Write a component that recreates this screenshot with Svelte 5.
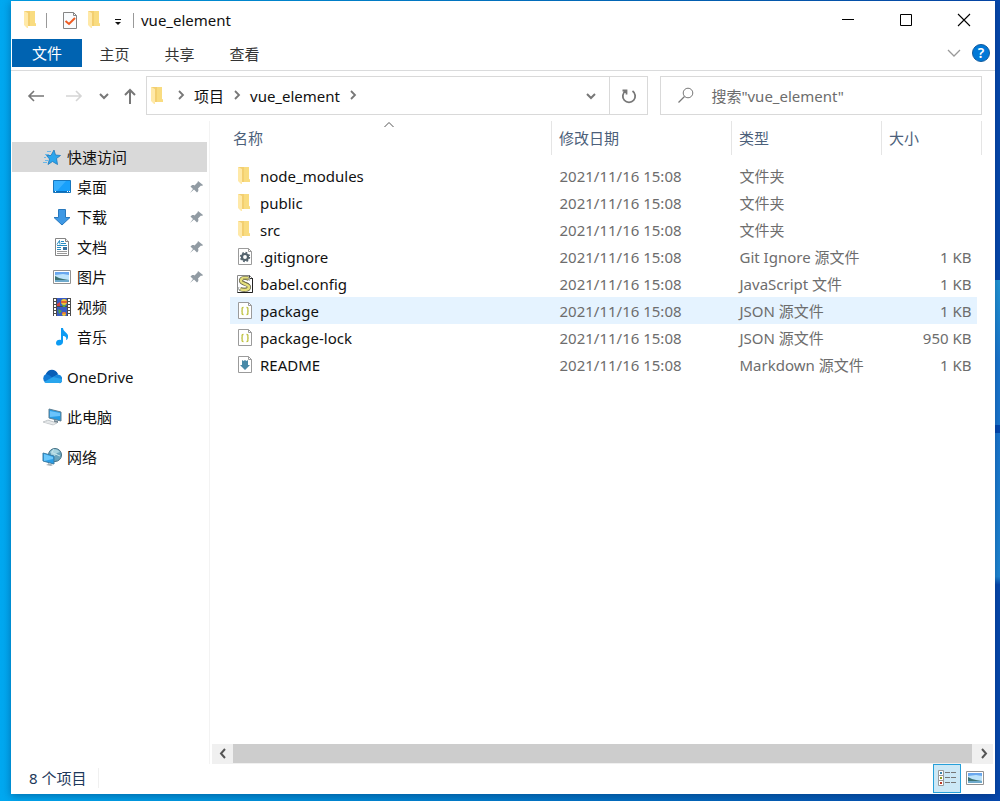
<script lang="ts">
  interface Place {
    name: string;
    icon: string;
    pinned?: boolean;
  }

  interface FileItem {
    name: string;
    icon: string;
    date: string;
    type: string;
    size: string;
  }

  const ribbonTabs: string[] = ['主页', '共享', '查看'];

  const quickAccess: Place[] = [
    { name: '桌面', icon: 'desktop', pinned: true },
    { name: '下载', icon: 'download', pinned: true },
    { name: '文档', icon: 'document', pinned: true },
    { name: '图片', icon: 'picture', pinned: true },
    { name: '视频', icon: 'video' },
    { name: '音乐', icon: 'music' }
  ];

  const roots: Place[] = [
    { name: 'OneDrive', icon: 'cloud' },
    { name: '此电脑', icon: 'computer' },
    { name: '网络', icon: 'network' }
  ];

  const date = '2021/11/16 15:08';

  const files: FileItem[] = [
    { name: 'node_modules', icon: 'folder', date, type: '文件夹', size: '' },
    { name: 'public', icon: 'folder', date, type: '文件夹', size: '' },
    { name: 'src', icon: 'folder', date, type: '文件夹', size: '' },
    { name: '.gitignore', icon: 'gear', date, type: 'Git Ignore 源文件', size: '1 KB' },
    { name: 'babel.config', icon: 'script', date, type: 'JavaScript 文件', size: '1 KB' },
    { name: 'package', icon: 'json', date, type: 'JSON 源文件', size: '1 KB' },
    { name: 'package-lock', icon: 'json', date, type: 'JSON 源文件', size: '950 KB' },
    { name: 'README', icon: 'markdown', date, type: 'Markdown 源文件', size: '1 KB' }
  ];

  let selected = $state('package');
  let view = $state('details');
  let search = $state('');
</script>

{#snippet icon(name: string)}
  <svg class="icon" viewBox="0 0 20 20" aria-hidden="true">
    {#if name === 'folder'}
      <path d="M3 1h11v12l1 1v2H5z" fill="#f3cf70" />
      <path d="M9 1h5v12l1 1v2H9z" fill="#f9dc80" />
      <path d="M3 1l4 2v15l-1 0-3-3z" fill="#ffe9a8" />
    {:else if name === 'star'}
      <path d="M12 3l1.500 5 5 .5-4 3 1 6-5-3-4.500 3 1.500-5.500-3-3.500h4.500z" fill="#2ba5ec" stroke="#1d78bd" stroke-width=".8" />
      <path d="M5 4.500h4M3 7.500h4M2 10.500h2M3 13.500h3M1 15.500h4" stroke="#69b7e8" stroke-width="1" />
    {:else if name === 'desktop'}
      <path d="M1.500 3.500h17v12h-17z" fill="#18a0fb" stroke="#1776bd" />
      <path d="M2 4h12L5 14H2z" fill="#37b0ff" />
      <path d="M2 14.500h16" stroke="#0a6ebc" />
      <path d="M3 14.500h1M15 14.500h1M17 14.500h1" stroke="#fff" />
    {:else if name === 'download'}
      <path d="M6.500 2.500h7v8h4.500l-8 7.500-8-7.500h4.500z" fill="#3e98e4" stroke="#2878bd" />
    {:else if name === 'document'}
      <path d="M3.500 1.500h10l3 3v14h-13z" fill="#fff" stroke="#858585" />
      <path d="M13.500 1.500v3h3" fill="#eee" stroke="#858585" />
      <path d="M5 7.500l2.500-4L8 7.500M9 4.500h3M9 6.500h5M5 8.500h10M5 10.500h4M5 12.500h4" fill="none" stroke="#278cc2" />
      <path d="M5 14.500h10M5 16.500h10" stroke="#999" />
      <path d="M11 10h4v3h-4z" fill="#38709d" />
    {:else if name === 'picture'}
      <path d="M1.500 3.500h17v13h-17z" fill="#fff" stroke="#929292" />
      <path d="M3 5h14v10H3z" fill="#bce3fb" />
      <path d="M3 5h14v3l-6-1-8 1z" fill="#69a7ee" />
      <path d="M3 9l4 2 4 1 6 1v1H3z" fill="#3d7272" />
      <path d="M3 13h14v2H3z" fill="#6faacc" />
    {:else if name === 'video'}
      <path d="M1 1h18v18H1z" fill="#4b4b4b" />
      <path d="M5 1h10v8H5zM5 10h10v9H5z" fill="#385cc5" />
      <path d="M3 2v17M17 2v17" stroke="#fff" stroke-width="2" stroke-dasharray="2 1" />
      <path d="M5 7l3-2v4H5z" fill="#dc453f" />
      <circle cx="12" cy="5" r="3" fill="#efc835" />
      <path d="M9 5h6" stroke="#df4433" stroke-width="1.500" />
      <path d="M10 8h4l-1 2h-2zM6 12l4 2-3 3z" fill="#55a64a" />
      <circle cx="12" cy="17" r="2" fill="#efc835" />
      <path d="M10 16h4" stroke="#dc453f" />
    {:else if name === 'music'}
      <path d="M9 1h2c0 4 6 5 5 9 0 2-1 3-2 3 1-3-1-4-3-4v6c0 4-7 5-7 1 0-3 3-4 5-3z" fill="#0c9bf3" />
    {:else if name === 'cloud'}
      <path d="M4 16a5 5 0 0 1 0-9c3-5 9-5 12 1 3 0 5 3 4 6s-2 2-4 2z" fill="#1179d4" />
      <path d="M4 7c2-5 9-6 12 0l-5 4-4-3z" fill="#075eb7" />
      <path d="M2 15l9-5 4-2c3-1 6 3 5 6-1 2-2 2-4 2H4z" fill="#29a5ed" />
      <path d="M11 10l4-2c3-1 5 2 5 4z" fill="#1686db" />
    {:else if name === 'computer'}
      <path d="M7 2l12 3v9L7 11z" fill="#269be3" stroke="#5e7e91" />
      <path d="M8 4l10 2v3L8 10z" fill="#6bc4fb" />
      <path d="M12 13v2l4 1v-2z" fill="#758894" />
      <path d="M1 15l5-2 9 3-4 2z" fill="#d4d9dc" stroke="#a1a7aa" stroke-width=".5" />
      <path d="M3 15l9 2M5 14l8 2.500" stroke="#fff" stroke-width=".5" />
    {:else if name === 'network'}
      <circle cx="13" cy="8" r="6.500" fill="#68a4bd" stroke="#426f83" />
      <path d="M8 5c4-4 7-3 10 0l-3 1-3 4-2-3z" fill="#a8d4df" />
      <path d="M12 2c-3 4-3 8 0 12M18 9l-7-3" fill="none" stroke="#c7e5eb" />
      <path d="M1 6l11 3v8L1 14z" fill="#2a9de6" stroke="#397ca5" />
      <path d="M2 7l9 3v2l-9 2z" fill="#6cc8fb" />
      <path d="M6 16v1l-2 1 5 1 2-1-2-1z" fill="#a7b2b8" />
    {:else if name === 'gear'}
      <path d="M3.500 1.500h10l3 3v13h-13z" fill="#fff" stroke="#9b9b9b" />
      <path d="M13.500 1.500v3h3" fill="none" stroke="#9b9b9b" />
      <circle cx="10" cy="10" r="3" fill="none" stroke="#53636d" stroke-width="2.200" />
      <circle cx="10" cy="10" r="4.400" fill="none" stroke="#53636d" stroke-width="1.600" stroke-dasharray="1.728 1.728" />
    {:else if name === 'script'}
      <path d="M2.500 1.500h12l3 3v14h-15z" fill="#fff" stroke="#888" />
      <path d="M17.500 4v14.500h-15" fill="none" stroke="#222" />
      <path d="M14.500 1.500v3h3" fill="none" stroke="#333" />
      <path d="M14 5c-3-2-9-1-8 2 1 3 8 3 8 6 0 4-7 3-9 2" fill="none" stroke="#5d5b49" stroke-width="4" />
      <path d="M14 5c-3-2-9-1-8 2 1 3 8 3 8 6 0 4-7 3-9 2" fill="none" stroke="#e5df7c" stroke-width="2.600" />
      <path d="M8 5h6M7 7l7 3M6 14h6" stroke="#77724a" stroke-width=".8" />
      <path d="M13 4l2 1-1 2M4 13l-1 2 3 1" fill="none" stroke="#a2a6a3" />
    {:else if name === 'json'}
      <path d="M3.500 1.500h10l3 3v13h-13z" fill="#fff" stroke="#9b9b9b" />
      <path d="M13.500 1.500v3h3" fill="none" stroke="#9b9b9b" />
      <path d="M8.500 6.500c-3 0 0 3-2 3.500 2 .5-1 3.500 2 3.500M11.500 6.500c3 0 0 3 2 3.500-2 .5 1 3.500-2 3.500" fill="none" stroke="#bdc13d" stroke-width="1.300" />
    {:else if name === 'markdown'}
      <path d="M3.500 1.500h10l3 3v13h-13z" fill="#fff" stroke="#9b9b9b" />
      <path d="M13.500 1.500v3h3" fill="none" stroke="#9b9b9b" />
      <path d="M7 5l1.500 1L10 5l1.500 1L13 5v5h2l-5 5-5-5h2z" fill="#4689a8" />
    {:else if name === 'check'}
      <path d="M3.500 2.500h10l3 3v13h-13z" fill="#f9fbfd" stroke="#858585" />
      <path d="M13.500 2.500v3h3" fill="none" stroke="#858585" />
      <path d="M5.500 11l3.500 3 6-6" fill="none" stroke="#ee5b22" stroke-width="2" />
    {:else if name === 'pin'}
      <path d="M11 4l5 4-1 1-1-.5-3 3c1 2 0 3-1 4l-3-3-4 3.500L6 12 3.500 9.500c1-1 2-2 4-1l3-3z" fill="#919ba3" />
    {:else if name === 'back'}
      <path d="M18 10H3M8 5l-5 5 5 5" fill="none" stroke="currentColor" stroke-width="1.600" />
    {:else if name === 'forward'}
      <path d="M2 10h15M12 5l5 5-5 5" fill="none" stroke="currentColor" stroke-width="1.600" />
    {:else if name === 'up'}
      <path d="M10 18V4M5 9l5-5 5 5" fill="none" stroke="currentColor" stroke-width="2" />
    {:else if name === 'down'}
      <path d="M6 8l4 4 4-4" fill="none" stroke="currentColor" stroke-width="2" />
    {:else if name === 'wide-down'}
      <path d="M4 7l6 6 6-6" fill="none" stroke="currentColor" stroke-width="1.300" />
    {:else if name === 'right'}
      <path d="M8 5l4 4-4 4" fill="none" stroke="currentColor" stroke-width="1.800" />
    {:else if name === 'scroll-left'}
      <path d="M12 5L8 9.500l4 4.500" fill="none" stroke="currentColor" stroke-width="2" />
    {:else if name === 'scroll-right'}
      <path d="M9 5l4 4.500L9 14" fill="none" stroke="currentColor" stroke-width="2" />
    {:else if name === 'refresh'}
      <path d="M13.500 5a6.200 6.200 0 1 1-7 0M3.500 4.500h4v4" fill="none" stroke="currentColor" stroke-width="1.800" />
    {:else if name === 'search'}
      <circle cx="12" cy="7" r="4.800" fill="none" stroke="currentColor" />
      <path d="M8.500 10.500L2.500 16.500" stroke="currentColor" stroke-width="1.200" />
    {:else if name === 'sort'}
      <path d="M5.500 12l4.500-4.500 4.500 4.500" fill="none" stroke="currentColor" />
    {:else if name === 'menu'}
      <path d="M7 9.500h6" stroke="currentColor" />
      <path d="M7 12h6l-3 3z" fill="currentColor" />
    {:else if name === 'minimize'}
      <path d="M4 9.500h12" stroke="currentColor" />
    {:else if name === 'maximize'}
      <path d="M4.500 4.500h11v11h-11z" fill="none" stroke="currentColor" />
    {:else if name === 'close'}
      <path d="M4 4l12 12M16 4L4 16" stroke="currentColor" stroke-width="1.100" />
    {:else if name === 'details'}
      <path d="M1.500 2.500h5v5h-5zM1.500 7.500h5v5h-5zM1.500 12.500h5v5h-5z" fill="#fff" stroke="#999" />
      <path d="M8 4.500h5M14 4.500h5M8 9.500h5M14 9.500h5M8 14.500h5M14 14.500h5" stroke="#777" />
      <path d="M3 4h2v2H3z" fill="#3b83ad" />
      <path d="M3 9h2v2H3z" fill="#8b9b23" />
      <path d="M3 14h2v2H3z" fill="#b93724" />
    {/if}
  </svg>
{/snippet}

<div class="desktop">
  <main class="window">
    <header class="titlebar">
      <div class="quick-tools">
        <button aria-label="系统菜单">{@render icon('folder')}</button>
        <span class="divider"></span>
        <button class="props" aria-label="属性">{@render icon('check')}</button>
        <button aria-label="新建文件夹">{@render icon('folder')}</button>
        <button aria-label="自定义快速访问工具栏">{@render icon('menu')}</button>
        <span class="divider"></span>
      </div>
      <h1>vue_element</h1>
      <div class="window-buttons">
        <button aria-label="最小化">{@render icon('minimize')}</button>
        <button aria-label="最大化">{@render icon('maximize')}</button>
        <button aria-label="关闭">{@render icon('close')}</button>
      </div>
    </header>

    <nav class="ribbon">
      <button class="file-tab">文件</button>
      {#each ribbonTabs as tab}
        <button class="tab">{tab}</button>
      {/each}
      <div class="ribbon-end">
        <button aria-label="展开功能区">{@render icon('wide-down')}</button>
        <button class="help" aria-label="帮助">?</button>
      </div>
    </nav>

    <div class="navbar">
      <div class="history">
        <button aria-label="返回">{@render icon('back')}</button>
        <button class="off" aria-label="前进" disabled>{@render icon('forward')}</button>
        <button class="recent" aria-label="最近浏览的位置">{@render icon('down')}</button>
        <button aria-label="上移">{@render icon('up')}</button>
      </div>
      <div class="address">
        {@render icon('folder')}
        <span class="chevron">{@render icon('right')}</span>
        <button>项目</button>
        <span class="chevron">{@render icon('right')}</span>
        <button>vue_element</button>
        <span class="chevron">{@render icon('right')}</span>
        <button class="expand" aria-label="以前的位置">{@render icon('down')}</button>
        <button class="refresh" aria-label="刷新">{@render icon('refresh')}</button>
      </div>
      <label class="search">
        {@render icon('search')}
        <input type="text" aria-label="搜索" placeholder={'搜索"vue_element"'} bind:value={search} />
      </label>
    </div>

    <div class="body">
      <aside class="sidebar">
        <a class="place current" href="#quick">{@render icon('star')}<span>快速访问</span></a>
        {#each quickAccess as place}
          <a class="place child" href="#{place.icon}">
            {@render icon(place.icon)}
            <span>{place.name}</span>
            {#if place.pinned}
              <span class="pin">{@render icon('pin')}</span>
            {/if}
          </a>
        {/each}
        {#each roots as place}
          <a class="place root" href="#{place.icon}">{@render icon(place.icon)}<span>{place.name}</span></a>
        {/each}
      </aside>

      <section class="content">
        <div class="list">
          <table>
            <colgroup>
              <col />
              <col class="col-date" />
              <col class="col-type" />
              <col class="col-size" />
            </colgroup>
            <thead>
              <tr>
                <th>名称<span class="sort">{@render icon('sort')}</span></th>
                <th>修改日期</th>
                <th>类型</th>
                <th>大小</th>
              </tr>
            </thead>
            <tbody>
              {#each files as file}
                <tr class:selected={selected === file.name} onclick={() => (selected = file.name)}>
                  <td class="name"><div>{@render icon(file.icon)}<span>{file.name}</span></div></td>
                  <td>{file.date}</td>
                  <td>{file.type}</td>
                  <td class="size">{file.size}</td>
                </tr>
              {/each}
            </tbody>
          </table>
        </div>
        <div class="scrollbar">
          <button aria-label="向左滚动">{@render icon('scroll-left')}</button>
          <div class="thumb"></div>
          <button aria-label="向右滚动">{@render icon('scroll-right')}</button>
        </div>
      </section>
    </div>

    <footer class="status">
      <span class="count">{files.length} 个项目</span>
      <div class="views">
        <button class:active={view === 'details'} aria-label="详细信息" onclick={() => (view = 'details')}>
          {@render icon('details')}
        </button>
        <button class:active={view === 'large'} aria-label="大缩略图" onclick={() => (view = 'large')}>
          {@render icon('picture')}
        </button>
      </div>
    </footer>
  </main>
</div>

<style>
  :global(body) {
    margin: 0;
  }

  .desktop {
    box-sizing: border-box;
    display: flex;
    min-height: 100vh;
    padding: 1px 5px 7px 11px;
    background:
      linear-gradient(180deg, #0648ad 0%, #0648ad 35%, #2299d8 35%, #1a78d0 45%, #1a78d0 53%, #0449b0 53%, #0449b0 54%, #1a78d0 54%, #1f88d4 72%, #0648ad 73%) right / 5px 100% no-repeat,
      linear-gradient(90deg, #00a8f0 0%, #0098e0 20%, #0462b8 75%, #0648ad 100%);
    font-family: "Noto Sans", "Noto Sans CJK SC", sans-serif;
    font-size: 15px;
    line-height: 20px;
    color: #111;
  }

  .window {
    flex: 1;
    display: flex;
    flex-direction: column;
    min-width: 0;
    background: #fff;
    box-shadow: 0 2px 8px rgba(0, 30, 80, 0.4);
  }

  button {
    display: flex;
    align-items: center;
    justify-content: center;
    padding: 0;
    border: 0;
    background: none;
    font: inherit;
    color: inherit;
  }

  .icon {
    display: block;
    flex: none;
    width: 20px;
    height: 20px;
  }

  /* title bar */
  .titlebar {
    display: flex;
    align-items: center;
    height: 38px;
  }

  .quick-tools {
    display: flex;
    align-items: center;
    padding-left: 8px;
  }

  .quick-tools .props {
    margin: 0 2px 0 7px;
  }

  .quick-tools button {
    width: 23px;
  }

  .divider {
    width: 1px;
    height: 15px;
    margin: 0 4px;
    background: #999;
  }

  h1 {
    margin: 0 0 0 3px;
    font-size: 15px;
    font-weight: 400;
    line-height: 20px;
  }

  .window-buttons {
    display: flex;
    margin-left: auto;
    padding-right: 2px;
    color: #000;
  }

  .window-buttons button {
    width: 58px;
    height: 38px;
  }

  /* ribbon */
  .ribbon {
    display: flex;
    height: 31px;
    padding-left: 1px;
    border-bottom: 1px solid #dadbdc;
  }

  .file-tab {
    width: 70px;
    height: 28px;
    background: #0063b1;
    color: #fff;
  }

  .tab {
    width: 65px;
    height: 29px;
    color: #333;
  }

  .ribbon-end {
    display: flex;
    align-items: center;
    gap: 8px;
    height: 28px;
    margin-left: auto;
    padding-right: 5px;
    color: #999;
  }

  .help {
    box-sizing: border-box;
    width: 18px;
    height: 18px;
    border: 1px solid #125b9e;
    border-radius: 50%;
    background: #0078d7;
    color: #fff;
    font-size: 14px;
    line-height: 16px;
    font-weight: 600;
  }

  /* address row */
  .navbar {
    display: flex;
    padding: 5px 13px 6px 15px;
    gap: 6px;
    color: #777;
  }

  .history {
    display: flex;
    align-items: center;
    gap: 18px;
    width: 114px;
  }

  .history .off {
    color: #d5d5d5;
  }

  .history .recent {
    margin: 0 -12px 0 -8px;
  }

  .address,
  .search {
    box-sizing: border-box;
    display: flex;
    align-items: center;
    height: 39px;
    border: 1px solid #d9d9d9;
  }

  .address {
    flex: 100;
    padding-left: 1px;
    color: #111;
  }

  .chevron {
    margin: 0 3px;
    color: #777;
  }

  .expand {
    margin-left: auto;
    width: 36px;
    color: #777;
  }

  .refresh {
    width: 38px;
    height: 37px;
    border-left: 1px solid #d9d9d9;
    color: #777;
  }

  .search {
    flex: 61;
    gap: 15px;
    margin-left: 6px;
    padding-left: 15px;
  }

  .search input {
    flex: 1;
    min-width: 0;
    padding: 0;
    border: 0;
    outline: none;
    background: none;
    font: inherit;
    color: #666;
  }

  .search input::placeholder {
    color: #6d6d6d;
    opacity: 1;
  }

  /* folders tree */
  .body {
    flex: 1;
    display: flex;
    min-height: 0;
  }

  .sidebar {
    box-sizing: border-box;
    width: 199px;
    padding: 21px 2px 0 1px;
    border-right: 1px solid #f3f3f3;
  }

  .place {
    display: flex;
    align-items: center;
    gap: 5px;
    height: 30px;
    padding-left: 30px;
    color: #111;
    text-decoration: none;
  }

  .place.current {
    background: #d9d9d9;
  }

  .place.child {
    padding-left: 40px;
  }

  .place.root {
    margin-top: 10px;
  }

  .pin {
    margin-left: auto;
  }

  /* file list */
  .content {
    flex: 1;
    display: flex;
    flex-direction: column;
    min-width: 0;
    padding: 0 2px;
  }

  .list {
    flex: 1;
    padding: 0 11px 0 18px;
  }

  table {
    width: 100%;
    table-layout: fixed;
    border-collapse: collapse;
  }

  .col-date {
    width: 180px;
  }

  .col-type {
    width: 150px;
  }

  .col-size {
    width: 100px;
  }

  th {
    position: relative;
    height: 34px;
    padding: 0 0 0 7px;
    border-right: 1px solid #e5e5e5;
    color: #4c607a;
    font-weight: 400;
    text-align: left;
  }

  th:first-child {
    padding-left: 3px;
  }

  .sort {
    position: absolute;
    top: -6px;
    left: 50%;
    margin-left: -12px;
    color: #555;
  }

  thead::after {
    content: "";
    display: block;
    height: 7px;
  }

  td {
    height: 27px;
    padding: 0 0 0 8px;
    color: #6d6d6d;
    white-space: nowrap;
  }

  td.name {
    padding-left: 5px;
    color: #111;
  }

  .name div {
    display: flex;
    align-items: center;
    gap: 5px;
  }

  td.size {
    padding-right: 10px;
    text-align: right;
  }

  .selected {
    background: #e5f3ff;
  }

  /* the highlight stops short of the last column's edge */
  .selected .size {
    box-shadow: inset -5px 0 #fff;
  }

  .scrollbar {
    display: flex;
    height: 20px;
    background: #f0f0f0;
    color: #555;
  }

  .scrollbar button {
    width: 21px;
  }

  .thumb {
    flex: 1;
    height: 19px;
    background: #cdcdcd;
  }

  /* status bar */
  .status {
    display: flex;
    align-items: center;
    height: 28px;
    padding: 0 6px 2px 18px;
    color: #1e395b;
  }

  .count {
    padding-right: 12px;
    border-right: 1px solid #f0f0f0;
  }

  .views {
    display: flex;
    margin-left: auto;
  }

  .views button {
    box-sizing: border-box;
    width: 28px;
    height: 29px;
    border: 1px solid transparent;
  }

  .views .active {
    border-color: #26a0da;
    background: #cce8f6;
  }
</style>
